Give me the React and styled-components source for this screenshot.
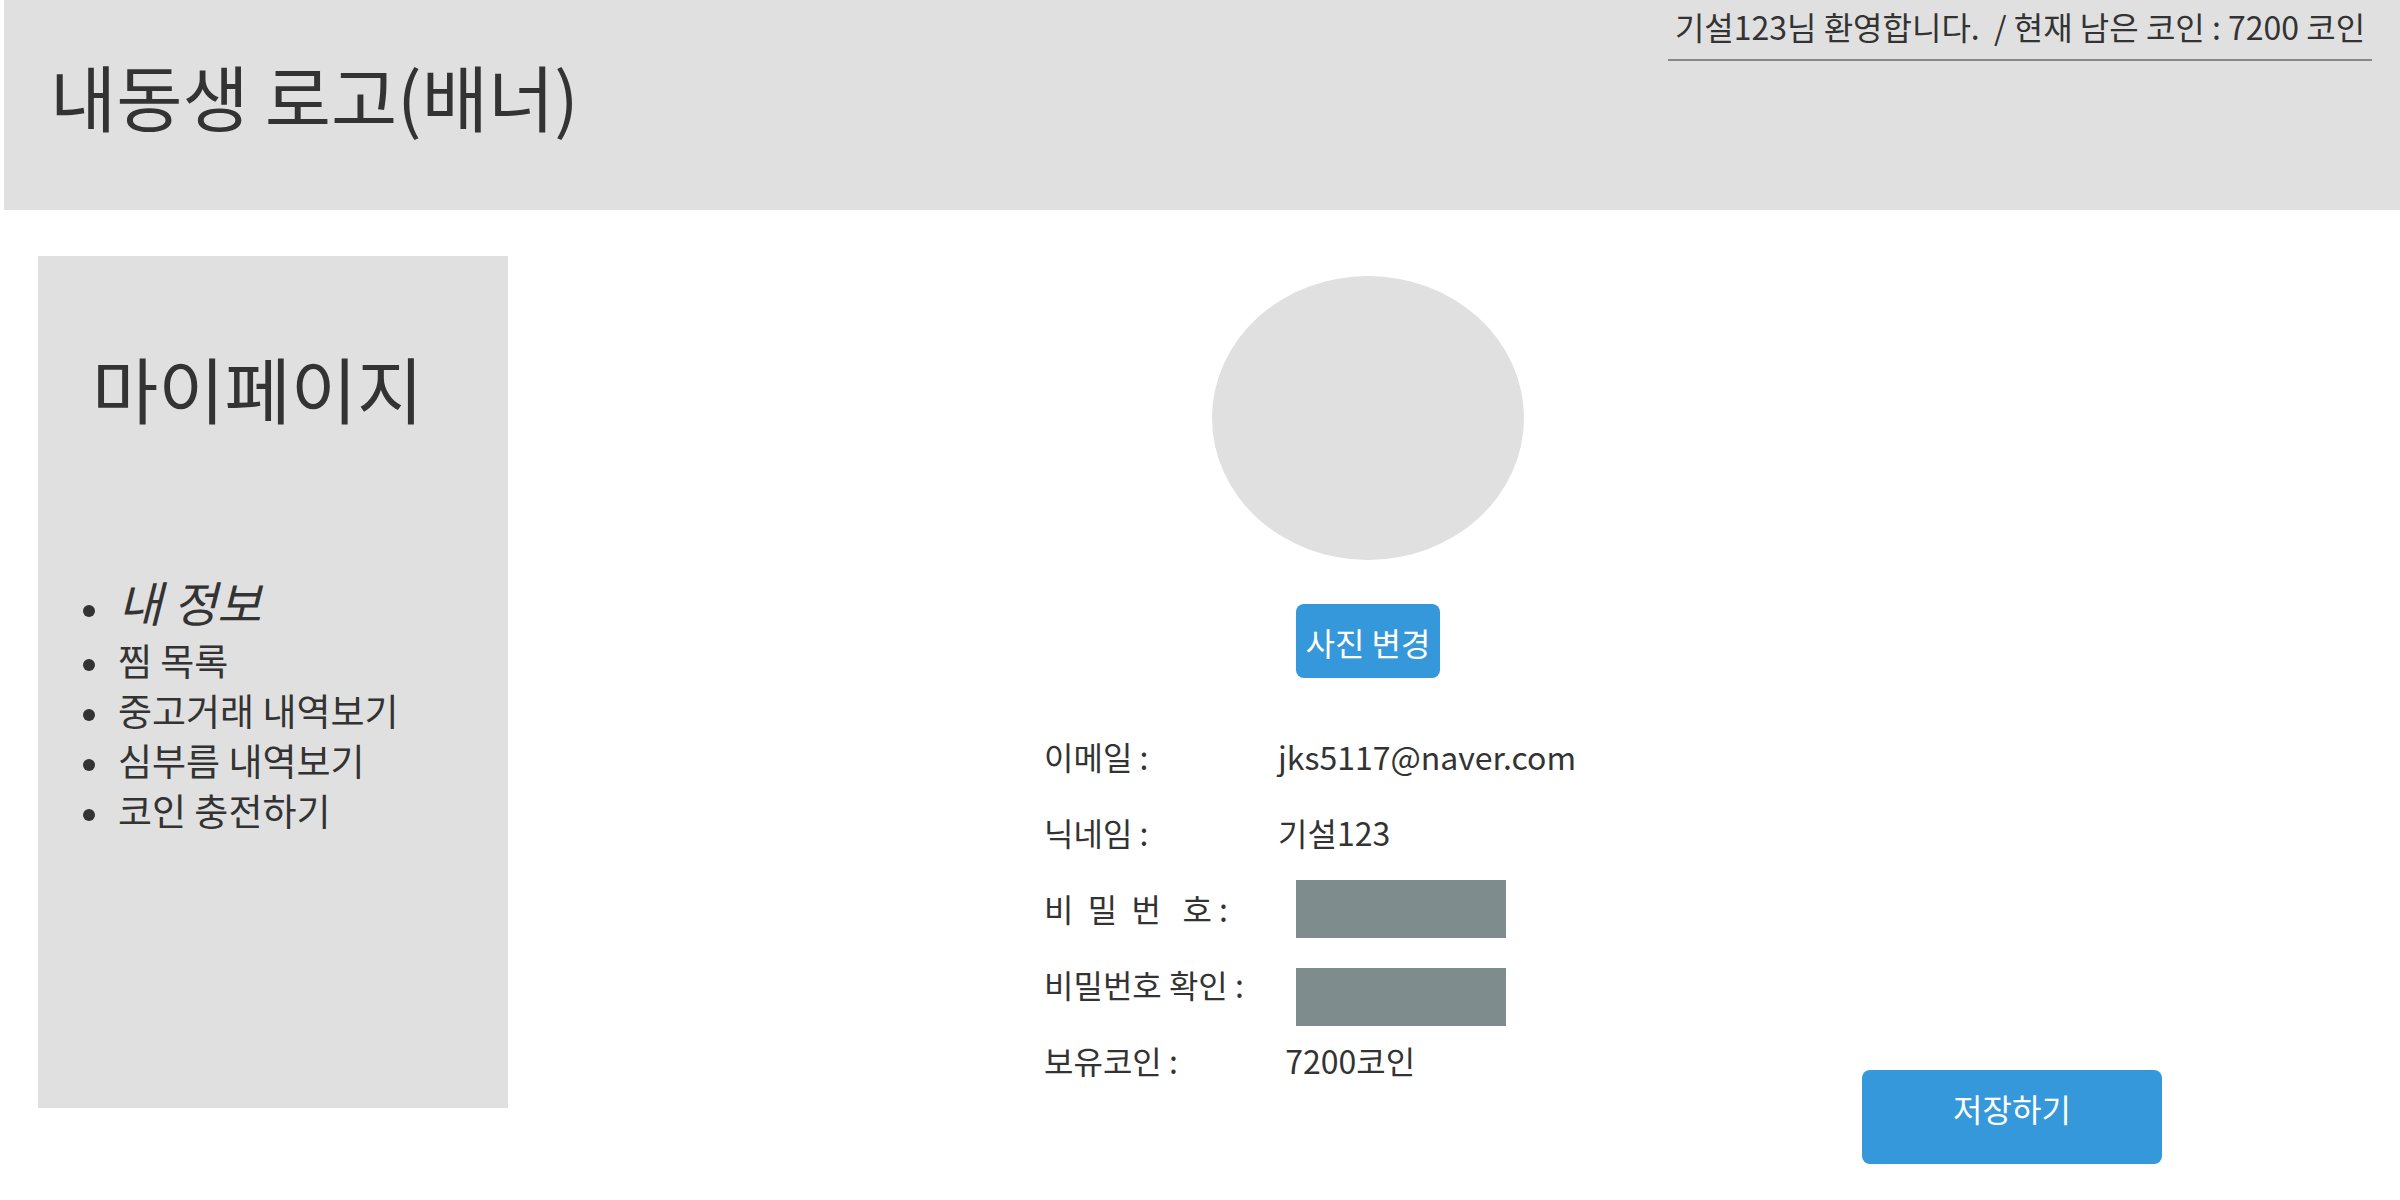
import React from "react";
import styled, { createGlobalStyle } from "styled-components";

const color = {
  ink: "#333333",
  panel: "#e0e0e0",
  rule: "#888888",
  accent: "#3498db",
  field: "#7f8c8d",
};

const GlobalStyle = createGlobalStyle`
  *, *::before, *::after { box-sizing: border-box; }
  body {
    margin: 0;
    background: #ffffff;
    color: ${color.ink};
    font-family: "Noto Sans CJK KR", sans-serif;
    font-size: 32px;
  }
  button, input { font: inherit; }
`;

const Header = styled.header`
  display: flex;
  justify-content: space-between;
  align-items: flex-start;
  height: 210px;
  margin-left: 4px;
  padding: 0 28px 0 46px;
  background: ${color.panel};
`;

const Title = styled.h1`
  margin: 0;
  padding-top: 45px;
  font-size: 72px;
  font-weight: 400;
  line-height: 100px;
  white-space: nowrap;
`;

const Welcome = styled.p`
  min-width: 704px;
  margin: 0;
  padding-bottom: 7px;
  border-bottom: 2px solid ${color.rule};
  line-height: 52px;
  text-align: center;
  white-space: pre;
`;

const Body = styled.div`
  display: flex;
  align-items: flex-start;
  padding-bottom: 36px;
`;

const Sidebar = styled.aside`
  flex: 0 0 470px;
  min-height: 852px;
  margin: 46px 0 0 38px;
  padding: 81px 24px 0 45px;
  background: ${color.panel};
`;

const SidebarTitle = styled.h2`
  margin: 0;
  padding-left: 9px;
  font-size: 72px;
  font-weight: 400;
  line-height: 100px;
`;

const Menu = styled.ul`
  margin: 131px 0 0;
  padding: 0;
  list-style: none;
`;

const MenuItem = styled.li`
  display: flex;
  align-items: flex-start;
  gap: 23px;
  height: ${(p) => (p.$current ? 66 : 50)}px;
  line-height: ${(p) => (p.$current ? 66 : 52)}px;
  font-size: ${(p) => (p.$current ? 48 : 37)}px;
  font-style: ${(p) => (p.$current ? "italic" : "normal")};

  &::before {
    content: "";
    width: 12px;
    height: 12px;
    margin-top: ${(p) => (p.$current ? 37 : 25)}px;
    border-radius: 50%;
    background: ${color.ink};
  }
`;

const MenuLink = styled.a`
  color: inherit;
  text-decoration: none;
  white-space: nowrap;
`;

const Content = styled.form`
  flex: 1;
  min-width: 0;
  display: grid;
  grid-template-columns: 536fr 648px 470fr 238fr;
`;

const Profile = styled.section`
  grid-column: 2;
  padding: 66px 0 62px;
`;

const Photo = styled.div`
  display: flex;
  flex-direction: column;
  align-items: center;
  gap: 44px;
  margin-bottom: 44px;
`;

const Avatar = styled.div`
  width: 312px;
  height: 284px;
  border-radius: 50%;
  background: ${color.panel};
`;

const Button = styled.button`
  border: 0;
  border-radius: 8px;
  background: ${color.accent};
  color: #ffffff;
  cursor: pointer;
`;

const PhotoButton = styled(Button)`
  width: 144px;
  height: 74px;
  padding: 2px 0 0;
  white-space: nowrap;
`;

const SaveButton = styled(Button)`
  grid-column: 3;
  justify-self: end;
  align-self: end;
  width: 300px;
  height: 94px;
  padding: 0 0 18px;
`;

const Row = styled.div`
  display: grid;
  grid-template-columns: 234px 1fr;
  align-items: start;
  height: 76px;
  line-height: 68px;
  white-space: pre;
`;

const Field = styled.input`
  align-self: ${(p) => p.$align};
  width: 210px;
  height: 58px;
  margin: ${(p) => (p.$align === "start" ? 6 : 0)}px 0 0 18px;
  padding: 0 12px;
  border: 0;
  background: ${color.field};
  color: #ffffff;
`;

const menu = ["내 정보", "찜 목록", "중고거래 내역보기", "심부름 내역보기", "코인 충전하기"];

export default function App() {
  return (
    <>
      <GlobalStyle />
      <Header>
        <Title>내동생 로고(배너)</Title>
        <Welcome>{"기설123님 환영합니다.  / 현재 남은 코인 : 7200 코인"}</Welcome>
      </Header>
      <Body>
        <Sidebar>
          <SidebarTitle>마이페이지</SidebarTitle>
          <nav>
            <Menu>
              {menu.map((name, i) => (
                <MenuItem key={name} $current={i === 0}>
                  <MenuLink href="#" aria-current={i === 0 ? "page" : undefined}>
                    {name}
                  </MenuLink>
                </MenuItem>
              ))}
            </Menu>
          </nav>
        </Sidebar>
        <Content onSubmit={(e) => e.preventDefault()}>
          <Profile>
            <Photo>
              <Avatar />
              <PhotoButton type="button">사진 변경</PhotoButton>
            </Photo>
            <Row>
              <span>이메일 :</span>
              <span>jks5117@naver.com</span>
            </Row>
            <Row>
              <span>닉네임 :</span>
              <span>기설123</span>
            </Row>
            <Row>
              <label htmlFor="password">{"비  밀  번   호 :"}</label>
              <Field id="password" type="password" $align="start" />
            </Row>
            <Row>
              <label htmlFor="password-check">비밀번호 확인 :</label>
              <Field id="password-check" type="password" $align="end" />
            </Row>
            <Row>
              <span>보유코인 :</span>
              <span>{" 7200코인"}</span>
            </Row>
          </Profile>
          <SaveButton type="submit">저장하기</SaveButton>
        </Content>
      </Body>
    </>
  );
}
